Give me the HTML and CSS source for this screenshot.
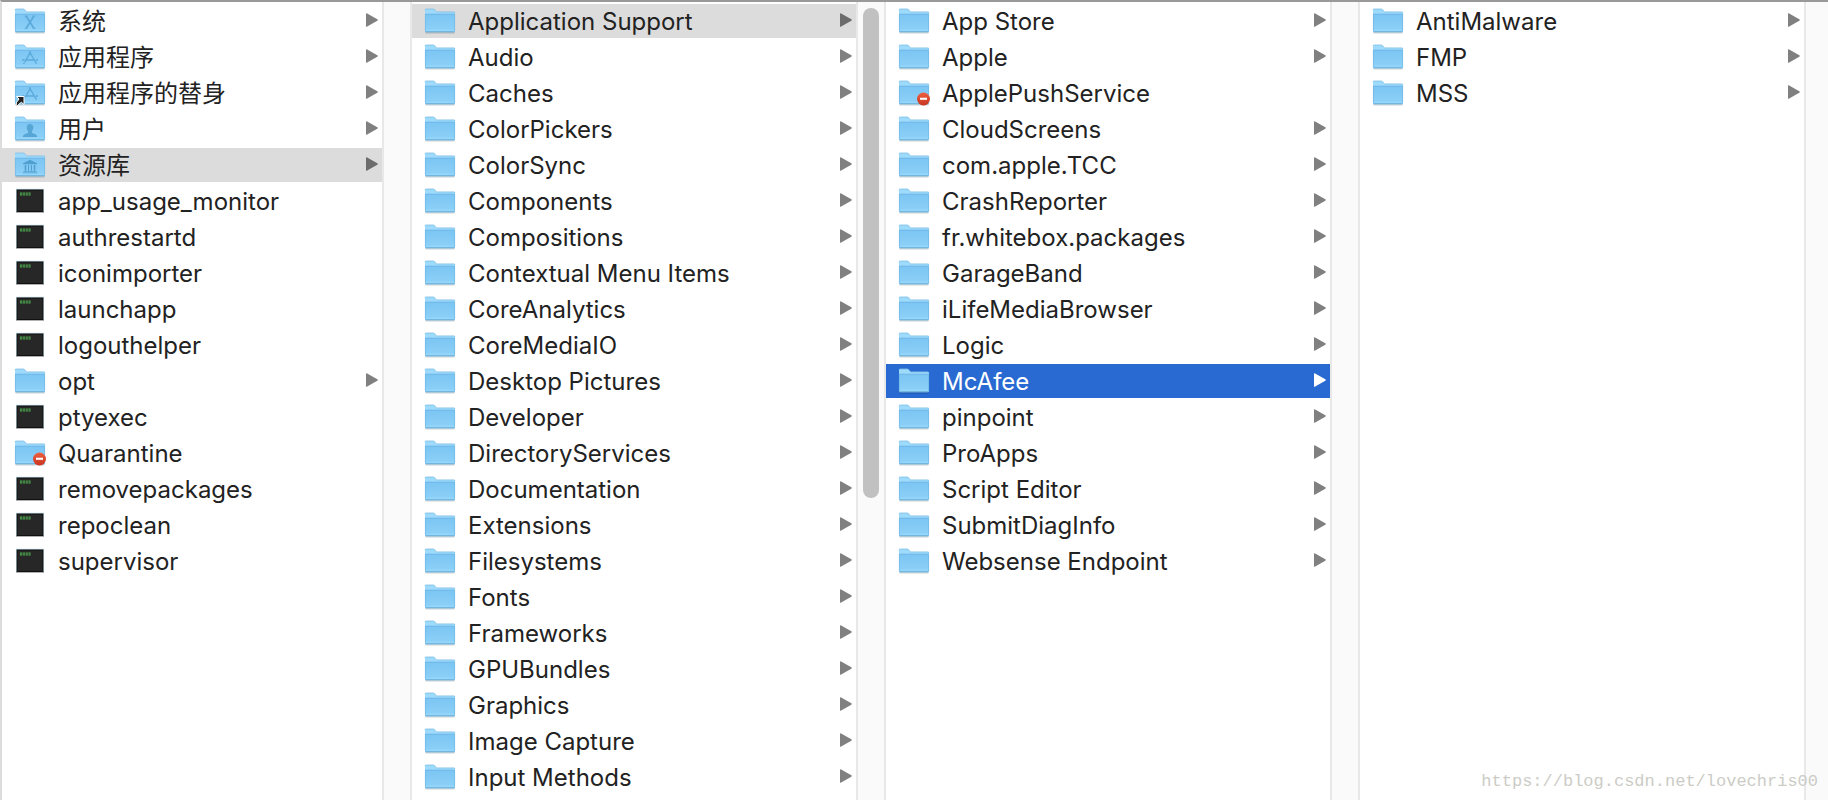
FILE: index.html
```
<!DOCTYPE html>
<html lang="zh-CN">
<head>
<meta charset="utf-8">
<title>Application Support</title>
<link rel="stylesheet" href="styles.css">
</head>
<body>
<svg class="defs" aria-hidden="true">
  <defs>
    <linearGradient id="front" x1="0" y1="0" x2="0" y2="1"><stop offset="0" stop-color="#7cc5f3"/><stop offset="1" stop-color="#8dd1f8"/></linearGradient>
    <linearGradient id="red" x1="0" y1="0" x2="0" y2="1"><stop offset="0" stop-color="#ee6040"/><stop offset="1" stop-color="#c93420"/></linearGradient>
    <symbol id="folder" viewBox="0 0 32 28">
      <path d="M1.5 25.8h29" stroke="#000" stroke-opacity=".18" stroke-width="1.4"/>
      <path d="M1 3.2Q1 2 2.2 2h7.2q.8 0 1.3.7l1.2 1.5q.5.7 1.3.7h16.6q1.2 0 1.2 1.2V12H1z" fill="#9ddafb"/>
      <path d="M1 3.2Q1 2 2.2 2h7.2q.8 0 1.3.7l1.2 1.5q.5.7 1.3.7h16.6q1.2 0 1.2 1.2" fill="none" stroke="#7fbfe6" stroke-width=".8"/>
      <path d="M1 7h30v17.2q0 1-1 1H2q-1 0-1-1z" fill="url(#front)"/>
      <path d="M1 7.2h30" stroke="#69b4e3" stroke-width=".8"/>
      <path d="M1.4 7v17M30.6 7v17" stroke="#70b7e2" stroke-width=".7"/>
      <path d="M2 23.2h28" stroke="#a2dcfa" stroke-width=".8"/>
      <path d="M1.4 24.8h29.2" stroke="#62a8d4" stroke-width=".9"/>
    </symbol>
    <symbol id="apps" viewBox="0 0 32 28">
      <g fill="none" stroke="#5aa9da" stroke-width="1.4"><path d="M15.200 8.500l7 11.500M16.800 8.500L10.500 19.500M12 17h8M8 17h2.500M21.800 17h2.200M9.500 20.800l.6-1M22.400 20.800l-.4-.8"/></g>
    </symbol>
    <symbol id="term" viewBox="0 0 32 28">
      <path d="M2 1.800h28v22.800H2z" fill="#b8d4df"/><path d="M2 25.200h28" stroke="#000" stroke-opacity=".35" stroke-width="1.400"/>
      <path d="M2.600 2.500h26.800v22.500H2.600z" fill="#111"/><path d="M3.500 3.500h25v20.500h-25z" fill="#272727"/>
      <path d="M6 7h11" stroke="#4da64d" stroke-width="2.800" stroke-dasharray="2.200 .6"/><path d="M6.500 7h10" stroke="#272727" stroke-width=".5"/>
    </symbol>
    <symbol id="deny" viewBox="0 0 32 28">
      <circle cx="25.500" cy="20" r="6.500" fill="url(#red)"/><path d="M22 18.700h7v2.100h-7z" fill="#fff"/>
    </symbol>
    <symbol id="arrow" viewBox="0 0 12 14"><path d="M0 1Q0-.3 1.200.4L11.300 6.300q1 .7 0 1.400L1.200 13.600Q0 14.300 0 13z"/></symbol>
  </defs>
</svg>
<main class="browser">
  <ul class="column root">
    <li><button class="row"><svg class="icon"><use href="#folder"/><path d="M12 9l8 12.500M20 9l-8 12.500" stroke="#5aa9da" stroke-width="1.700"/><path d="M10.500 9h3.500M18.500 9h3M10.500 21.500h3M18.500 21.500h3.500" stroke="#5aa9da" stroke-width=".7"/></svg><span class="name">系统</span><svg class="arrow"><use href="#arrow"/></svg></button></li>
    <li><button class="row"><svg class="icon"><use href="#folder"/><use href="#apps"/></svg><span class="name">应用程序</span><svg class="arrow"><use href="#arrow"/></svg></button></li>
    <li><button class="row"><svg class="icon"><use href="#folder"/><use href="#apps"/><path d="M2.500 17.500h7.500v8l-2.600-2.200Q4.500 25 2.300 28 1 23.500 5 20z" fill="#222" stroke="#fff" stroke-width="1"/></svg><span class="name">应用程序的替身</span><svg class="arrow"><use href="#arrow"/></svg></button></li>
    <li><button class="row"><svg class="icon"><use href="#folder"/><path d="M16 9c2.300 0 3.500 1.400 3.300 3.700-.1 1.600-.6 2.600-1.400 3.500-.3 1.300.2 1.800 1.600 2.300 2.200.7 3.500 1.200 3.700 3.500H8.800c.2-2.300 1.500-2.800 3.700-3.500 1.400-.5 1.900-1 1.600-2.300-.8-.9-1.300-1.900-1.400-3.500C12.500 10.400 13.700 9 16 9z" fill="#58a6d6"/></svg><span class="name">用户</span><svg class="arrow"><use href="#arrow"/></svg></button></li>
    <li><button class="row selected"><svg class="icon"><use href="#folder"/><path d="M16 8.800l7 3.400v1H9v-1zM10.700 14h1.600v5.800h-1.600zM14 14h1.100v5.800H14zM16.900 14H18v5.800h-1.100zM19.700 14h1.600v5.800h-1.600zM9.500 20.200h13v.8h-13zM8.700 21.500h14.600v.8H8.700z" fill="#4f9fd0"/></svg><span class="name">资源库</span><svg class="arrow"><use href="#arrow"/></svg></button></li>
    <li><button class="row"><svg class="icon"><use href="#term"/></svg><span class="name">app_usage_monitor</span></button></li>
    <li><button class="row"><svg class="icon"><use href="#term"/></svg><span class="name">authrestartd</span></button></li>
    <li><button class="row"><svg class="icon"><use href="#term"/></svg><span class="name">iconimporter</span></button></li>
    <li><button class="row"><svg class="icon"><use href="#term"/></svg><span class="name">launchapp</span></button></li>
    <li><button class="row"><svg class="icon"><use href="#term"/></svg><span class="name">logouthelper</span></button></li>
    <li><button class="row"><svg class="icon"><use href="#folder"/></svg><span class="name">opt</span><svg class="arrow"><use href="#arrow"/></svg></button></li>
    <li><button class="row"><svg class="icon"><use href="#term"/></svg><span class="name">ptyexec</span></button></li>
    <li><button class="row"><svg class="icon"><use href="#folder"/><use href="#deny"/></svg><span class="name">Quarantine</span></button></li>
    <li><button class="row"><svg class="icon"><use href="#term"/></svg><span class="name">removepackages</span></button></li>
    <li><button class="row"><svg class="icon"><use href="#term"/></svg><span class="name">repoclean</span></button></li>
    <li><button class="row"><svg class="icon"><use href="#term"/></svg><span class="name">supervisor</span></button></li>
  </ul>
  <div class="gutter"></div>
  <ul class="column">
    <li><button class="row selected"><svg class="icon"><use href="#folder"/></svg><span class="name">Application Support</span><svg class="arrow"><use href="#arrow"/></svg></button></li>
    <li><button class="row"><svg class="icon"><use href="#folder"/></svg><span class="name">Audio</span><svg class="arrow"><use href="#arrow"/></svg></button></li>
    <li><button class="row"><svg class="icon"><use href="#folder"/></svg><span class="name">Caches</span><svg class="arrow"><use href="#arrow"/></svg></button></li>
    <li><button class="row"><svg class="icon"><use href="#folder"/></svg><span class="name">ColorPickers</span><svg class="arrow"><use href="#arrow"/></svg></button></li>
    <li><button class="row"><svg class="icon"><use href="#folder"/></svg><span class="name">ColorSync</span><svg class="arrow"><use href="#arrow"/></svg></button></li>
    <li><button class="row"><svg class="icon"><use href="#folder"/></svg><span class="name">Components</span><svg class="arrow"><use href="#arrow"/></svg></button></li>
    <li><button class="row"><svg class="icon"><use href="#folder"/></svg><span class="name">Compositions</span><svg class="arrow"><use href="#arrow"/></svg></button></li>
    <li><button class="row"><svg class="icon"><use href="#folder"/></svg><span class="name">Contextual Menu Items</span><svg class="arrow"><use href="#arrow"/></svg></button></li>
    <li><button class="row"><svg class="icon"><use href="#folder"/></svg><span class="name">CoreAnalytics</span><svg class="arrow"><use href="#arrow"/></svg></button></li>
    <li><button class="row"><svg class="icon"><use href="#folder"/></svg><span class="name">CoreMediaIO</span><svg class="arrow"><use href="#arrow"/></svg></button></li>
    <li><button class="row"><svg class="icon"><use href="#folder"/></svg><span class="name">Desktop Pictures</span><svg class="arrow"><use href="#arrow"/></svg></button></li>
    <li><button class="row"><svg class="icon"><use href="#folder"/></svg><span class="name">Developer</span><svg class="arrow"><use href="#arrow"/></svg></button></li>
    <li><button class="row"><svg class="icon"><use href="#folder"/></svg><span class="name">DirectoryServices</span><svg class="arrow"><use href="#arrow"/></svg></button></li>
    <li><button class="row"><svg class="icon"><use href="#folder"/></svg><span class="name">Documentation</span><svg class="arrow"><use href="#arrow"/></svg></button></li>
    <li><button class="row"><svg class="icon"><use href="#folder"/></svg><span class="name">Extensions</span><svg class="arrow"><use href="#arrow"/></svg></button></li>
    <li><button class="row"><svg class="icon"><use href="#folder"/></svg><span class="name">Filesystems</span><svg class="arrow"><use href="#arrow"/></svg></button></li>
    <li><button class="row"><svg class="icon"><use href="#folder"/></svg><span class="name">Fonts</span><svg class="arrow"><use href="#arrow"/></svg></button></li>
    <li><button class="row"><svg class="icon"><use href="#folder"/></svg><span class="name">Frameworks</span><svg class="arrow"><use href="#arrow"/></svg></button></li>
    <li><button class="row"><svg class="icon"><use href="#folder"/></svg><span class="name">GPUBundles</span><svg class="arrow"><use href="#arrow"/></svg></button></li>
    <li><button class="row"><svg class="icon"><use href="#folder"/></svg><span class="name">Graphics</span><svg class="arrow"><use href="#arrow"/></svg></button></li>
    <li><button class="row"><svg class="icon"><use href="#folder"/></svg><span class="name">Image Capture</span><svg class="arrow"><use href="#arrow"/></svg></button></li>
    <li><button class="row"><svg class="icon"><use href="#folder"/></svg><span class="name">Input Methods</span><svg class="arrow"><use href="#arrow"/></svg></button></li>
  </ul>
  <div class="gutter"><div class="thumb"></div></div>
  <ul class="column">
    <li><button class="row"><svg class="icon"><use href="#folder"/></svg><span class="name">App Store</span><svg class="arrow"><use href="#arrow"/></svg></button></li>
    <li><button class="row"><svg class="icon"><use href="#folder"/></svg><span class="name">Apple</span><svg class="arrow"><use href="#arrow"/></svg></button></li>
    <li><button class="row"><svg class="icon"><use href="#folder"/><use href="#deny"/></svg><span class="name">ApplePushService</span></button></li>
    <li><button class="row"><svg class="icon"><use href="#folder"/></svg><span class="name">CloudScreens</span><svg class="arrow"><use href="#arrow"/></svg></button></li>
    <li><button class="row"><svg class="icon"><use href="#folder"/></svg><span class="name">com.apple.TCC</span><svg class="arrow"><use href="#arrow"/></svg></button></li>
    <li><button class="row"><svg class="icon"><use href="#folder"/></svg><span class="name">CrashReporter</span><svg class="arrow"><use href="#arrow"/></svg></button></li>
    <li><button class="row"><svg class="icon"><use href="#folder"/></svg><span class="name">fr.whitebox.packages</span><svg class="arrow"><use href="#arrow"/></svg></button></li>
    <li><button class="row"><svg class="icon"><use href="#folder"/></svg><span class="name">GarageBand</span><svg class="arrow"><use href="#arrow"/></svg></button></li>
    <li><button class="row"><svg class="icon"><use href="#folder"/></svg><span class="name">iLifeMediaBrowser</span><svg class="arrow"><use href="#arrow"/></svg></button></li>
    <li><button class="row"><svg class="icon"><use href="#folder"/></svg><span class="name">Logic</span><svg class="arrow"><use href="#arrow"/></svg></button></li>
    <li><button class="row active"><svg class="icon"><use href="#folder"/></svg><span class="name">McAfee</span><svg class="arrow"><use href="#arrow"/></svg></button></li>
    <li><button class="row"><svg class="icon"><use href="#folder"/></svg><span class="name">pinpoint</span><svg class="arrow"><use href="#arrow"/></svg></button></li>
    <li><button class="row"><svg class="icon"><use href="#folder"/></svg><span class="name">ProApps</span><svg class="arrow"><use href="#arrow"/></svg></button></li>
    <li><button class="row"><svg class="icon"><use href="#folder"/></svg><span class="name">Script Editor</span><svg class="arrow"><use href="#arrow"/></svg></button></li>
    <li><button class="row"><svg class="icon"><use href="#folder"/></svg><span class="name">SubmitDiagInfo</span><svg class="arrow"><use href="#arrow"/></svg></button></li>
    <li><button class="row"><svg class="icon"><use href="#folder"/></svg><span class="name">Websense Endpoint</span><svg class="arrow"><use href="#arrow"/></svg></button></li>
  </ul>
  <div class="gutter"></div>
  <ul class="column">
    <li><button class="row"><svg class="icon"><use href="#folder"/></svg><span class="name">AntiMalware</span><svg class="arrow"><use href="#arrow"/></svg></button></li>
    <li><button class="row"><svg class="icon"><use href="#folder"/></svg><span class="name">FMP</span><svg class="arrow"><use href="#arrow"/></svg></button></li>
    <li><button class="row"><svg class="icon"><use href="#folder"/></svg><span class="name">MSS</span><svg class="arrow"><use href="#arrow"/></svg></button></li>
  </ul>
  <div class="gutter last"></div>
  <div class="watermark">https://blog.csdn.net/lovechris00</div>
</main>
</body>
</html>
```
FILE: styles.css
```
* { box-sizing: border-box; }
body {
  margin: 0;
  background: #fff;
  color: #222;
  font-family: Inter, "Noto Sans CJK SC", sans-serif;
  font-size: 24px;
}
.defs { position: absolute; width: 0; height: 0; }
.browser {
  position: relative;
  display: flex;
  min-height: 100vh;
  border-top: 2px solid #9b9898;
  border-left: 2px solid #dcdcdc;
  overflow: hidden;
}
.column {
  flex: 444 1 0;
  min-width: 0;
  margin: 0;
  padding: 2px 0;
  list-style: none;
  display: flex;
  flex-direction: column;
  gap: 2px;
}
.column.root { flex-grow: 380; }
.row {
  display: flex;
  align-items: center;
  width: 100%;
  height: 34px;
  padding: 0 4px 0 12px;
  border: 0;
  background: none;
  color: inherit;
  font: inherit;
  line-height: 34px;
  text-align: left;
}
.icon {
  flex: none;
  width: 32px;
  height: 28px;
  margin-right: 12px;
  overflow: visible;
}
.name { flex: 1; min-width: 0; padding-top: 2px; white-space: nowrap; }
.arrow { flex: none; width: 12px; height: 14px; margin-bottom: 2px; fill: #808080; }
.selected { background: #dcdcdc; }
.selected .arrow { fill: #6c6c6c; }
.active { background: #2869d2; color: #fff; }
.active .arrow { fill: #fff; }
.gutter {
  flex: none;
  display: flex;
  flex-direction: column;
  width: 30px;
  padding: 6px 0;
  border: solid #e8e8e8;
  border-width: 0 2px;
  background: #fafafa;
}
.gutter.last { width: 24px; border-right: 0; }
.thumb {
  width: 16px;
  height: 62%;
  min-height: 490px;
  margin: 0 auto;
  border-radius: 8px;
  background: #c1c1c1;
}
.watermark {
  position: absolute;
  right: 10px;
  bottom: 8px;
  color: #ccccc6;
  font: 17px/20px "Liberation Mono", monospace;
}
```
